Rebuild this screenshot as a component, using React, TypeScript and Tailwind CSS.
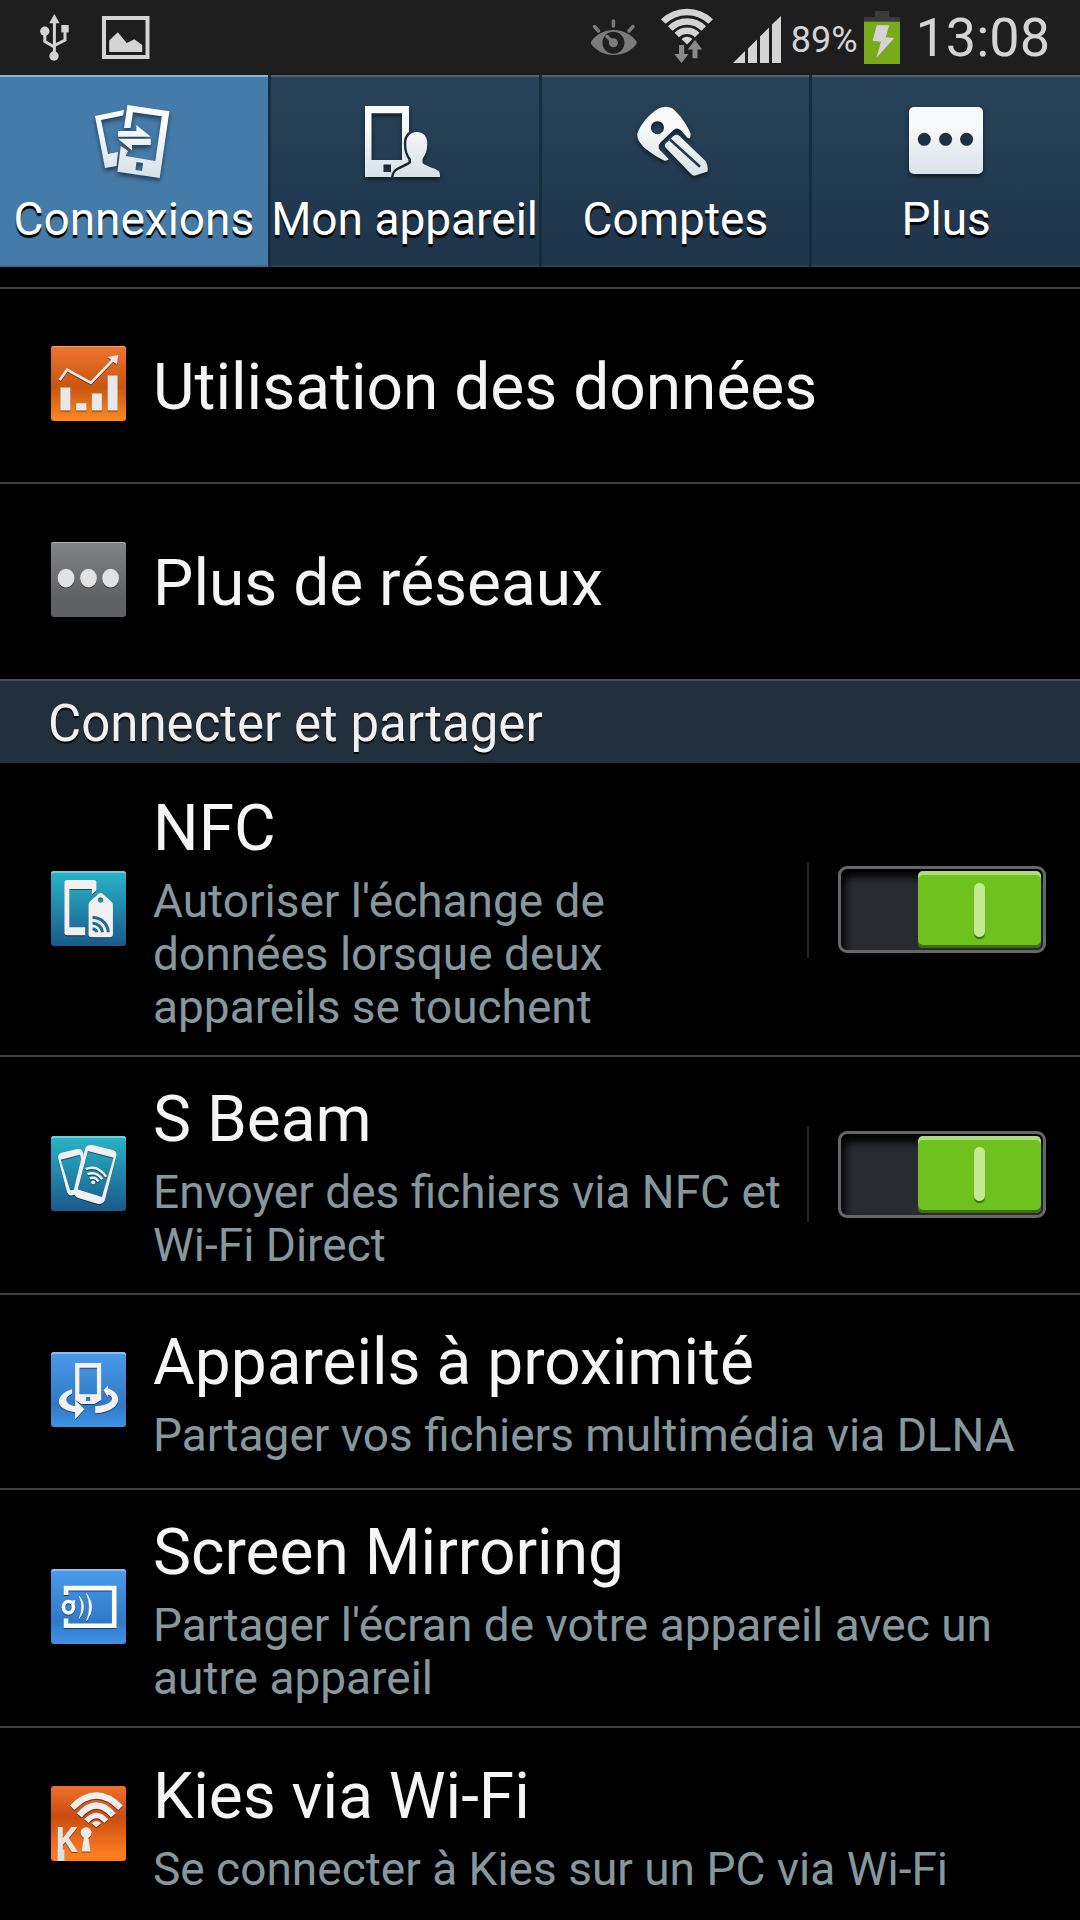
import React from 'react';

const FONT = "font-['Roboto','Noto_Sans',sans-serif]";

/* Status bar icons, all drawn on a 75px high strip */

function UsbIcon() {
  return (
    <svg className="w-8 h-[75px]" viewBox="0 -14 32 75" fill="#d4d4d4" aria-hidden="true">
      <path d="M15.4 0 20.6 9.3H10.2Z" />
      <path d="M15.4 8V40M5.8 18V27.5L15.4 33M26 16V26L15.4 31.5" fill="none" stroke="#d4d4d4" strokeWidth="3" />
      <circle cx="15" cy="42" r="4.7" />
      <circle cx="5.8" cy="17.3" r="4.7" />
      <rect x="22.3" y="11" width="7.4" height="7.4" />
    </svg>
  );
}

function PictureIcon() {
  return (
    <svg className="w-12 h-[75px]" viewBox="0 -16 48 75" fill="#d4d4d4" aria-hidden="true">
      <path d="M0 0H47.5V43H0ZM4 4V39H43.5V4Z" fillRule="evenodd" />
      <path d="M7.2 24.5 15.8 16.3 24.7 27 32.3 23.3 40.2 29V36H7.2Z" />
    </svg>
  );
}

function EyeIcon() {
  return (
    <svg className="w-[46px] h-[75px]" viewBox="0 -19 46 75" fill="#7b7b7b" aria-hidden="true">
      <path d="M0 22.5C6 15 13 11 22.5 11S40 15 45.5 22.5V25C40 32 32 36 22.5 36S6 32 0 25Z" />
      <circle cx="22.4" cy="23.7" r="11" fill="#1e1e1e" />
      <circle cx="22.4" cy="23.7" r="4.5" />
      <path
        d="M22.4 23.7 16 17.5M22.4 2V7M3.5 7.5 7.5 12M42 7.5 38 12"
        stroke="#7b7b7b"
        strokeWidth="3.5"
        strokeLinecap="round"
      />
    </svg>
  );
}

function WifiIcon() {
  return (
    <svg className="w-[52px] h-[75px]" viewBox="0 -10 52 75" fill="none" aria-hidden="true">
      <g stroke="#d4d4d4" strokeWidth="6.5">
        <path d="M2.3 11.5A34 34 0 0 1 49.7 11.5" />
        <path d="M9.3 18.5A23.5 23.5 0 0 1 42.7 18.5" />
        <path d="M15.8 25A14.5 14.5 0 0 1 36.2 25" />
      </g>
      <path d="M20.5 29Q26 24.5 31.5 29L26 34.5Z" fill="#d4d4d4" />
      <path d="M18 35H23.2V44H27.5L20.5 53 13.3 44H18ZM34 30 41.2 39.5H36.5V48.3H31.5V39.5H26.7Z" fill="#8a8a8a" />
    </svg>
  );
}

function SignalIcon() {
  return (
    <svg className="w-12 h-[75px]" viewBox="0 -16 48 75" fill="#d4d4d4" aria-hidden="true">
      <path d="M0 47 12 35V47ZM15 32.5 24 23.5V47H15ZM27 20.5 36 11.5V47H27ZM39 8.5 48 0V47H39Z" />
    </svg>
  );
}

function BatteryIcon() {
  return (
    <svg className="w-9 h-[75px]" viewBox="0 -11 36 75" aria-hidden="true">
      <path d="M11 0H25V6H36V10H0V6H11Z" fill="#3a3a3a" />
      <path d="M0 10H36V11H0Z" fill="#4b5c2c" />
      <path d="M0 11H36V53H0Z" fill="#79aa19" />
      <path d="M12.8 14.3H25.2L21.7 26.3 30.3 27 12.5 46.7 17 30.7 8.6 29.7Z" fill="#d4d4d4" />
    </svg>
  );
}

function StatusBar() {
  return (
    <header className="flex items-center justify-between h-[75px] bg-[#1e1e1e] text-[#d4d4d4] pl-[39px] pr-[30px]">
      <div className="flex items-center gap-[31px]">
        <UsbIcon />
        <PictureIcon />
      </div>
      <div className="flex items-center">
        <EyeIcon />
        <span className="w-6" />
        <WifiIcon />
        <span className="w-5" />
        <SignalIcon />
        <span className="text-[36px] leading-[42px] pl-2.5 pr-1.5 pt-1">89%</span>
        <BatteryIcon />
        <time className="text-[54px] leading-[64px] pl-4">13:08</time>
      </div>
    </header>
  );
}

/* Tab icons */

function ConnectionsIcon() {
  return (
    <>
      <path d="M1 14 30 8 29 13.5 7 18 14 52 24 50 22.5 64 11 66Z" />
      <path
        fillRule="evenodd"
        d="M33.4 3 75.4 9.3 65.7 76 23.4 69.7 26.8 44 34 49 31.7 54 61.3 59 67.8 14.3 39 10.3 36.5 26H30ZM42.5 60 49 61 48 69 41.5 68Z"
      />
      <path d="M24 29H42.3V23L56.8 34.7H24ZM24 36.7H56.8V43H38V48.5Z" />
    </>
  );
}

function DeviceIcon() {
  const person =
    'M51.6 30C58 30 62.5 34 62.3 42 62 50 60 53 57.5 57V61C62 65 72 66.5 74 69.5 75 71 75 73 75 75H28.6C29 70.5 31 69 34 67.5 39 65 43 63.5 46 61V57C43 53 41.3 49 41.3 42 41 34 46 30 51.6 30Z';
  return (
    <>
      <mask id="person-gap">
        <rect width="80" height="80" fill="#fff" />
        <path d={person} fill="#000" stroke="#000" strokeWidth="5" />
      </mask>
      <path
        mask="url(#person-gap)"
        fillRule="evenodd"
        d="M0 4H44V75H0ZM6.5 11.3V58H37V11.3ZM18.5 62.5H26V70H18.5Z"
      />
      <path d={person} />
    </>
  );
}

function KeyIcon() {
  return (
    <>
      <path
        fillRule="evenodd"
        d="M24 6.3Q31 3 37.6 6.5C43 11 52 22 55.5 31.3Q56 35 54.5 36.5L52.4 35.7 45.5 28Q42 25 38.5 28L25.5 40.5Q22.5 44 24.5 47.5L33.8 57.3Q32 59 29.7 58.7C20 54 13 49 8.3 44.7Q1 37 2.5 31C6 22 14 12 24 6.3ZM22.4 19.2A6.5 6.5 0 1 0 22.5 19.2Z"
      />
      <path d="M38 34.5Q41.5 31 45 34.5L71 59.5Q73.5 65 72.5 69.5L59.5 73.7Q57.5 73.5 56 72L30.5 45.5Q29 43 31 41Z" />
      <path d="M35 37.5 65 64.7" stroke="#21394f" strokeWidth="2.5" />
    </>
  );
}

function MoreIcon() {
  return (
    <>
      <rect x="3" y="5" width="74" height="67" rx="5" />
      <g fill="#1b3044">
        <circle cx="18.3" cy="37.3" r="6.5" />
        <circle cx="39.6" cy="37.3" r="6.5" />
        <circle cx="60.6" cy="37.3" r="6.5" />
      </g>
    </>
  );
}

const tabs = [
  { label: 'Connexions', icon: ConnectionsIcon },
  { label: 'Mon appareil', icon: DeviceIcon },
  { label: 'Comptes', icon: KeyIcon },
  { label: 'Plus', icon: MoreIcon },
];

function TabBar() {
  const [active, setActive] = React.useState('Connexions');

  return (
    <nav className="grid grid-cols-4 gap-[3px] bg-[#162c3f]" role="tablist">
      {tabs.map((tab) => {
        const isActive = tab.label === active;
        const Icon = tab.icon;
        return (
          <button
            key={tab.label}
            role="tab"
            aria-selected={isActive}
            onClick={() => setActive(tab.label)}
            className={`flex flex-col items-center h-48 pt-[25px] border-t-2 border-b-2 whitespace-nowrap text-white
              ${
                isActive
                  ? 'bg-[#447ba8] border-t-[#8bb2d0] border-b-[#3c6a8f]'
                  : 'bg-linear-to-b from-[#284359] to-[#1e344b] border-t-[#4f6473] border-b-[#2d4354]'
              }`}
          >
            <svg
              className="size-20 drop-shadow-[0_3px_2px_rgba(0,0,0,0.5)]"
              viewBox="0 0 80 80"
              fill="url(#tab-fill)"
              aria-hidden="true"
            >
              <defs>
                <linearGradient id="tab-fill" gradientUnits="userSpaceOnUse" x1="0" y1="0" x2="0" y2="80">
                  <stop offset="0.3" stopColor="#f8f9fa" />
                  <stop offset="1" stopColor="#d3dfe6" />
                </linearGradient>
              </defs>
              <Icon />
            </svg>
            <span className="mt-[11px] text-[46px] leading-[53px] [text-shadow:0_3px_1px_#000]">{tab.label}</span>
          </button>
        );
      })}
    </nav>
  );
}

/* List icons, drawn inside a 75px tile */

function DataUsageIcon() {
  return (
    <svg viewBox="62 50 224 224" fill="#e8e8e8" aria-hidden="true">
      <path d="M88 152 110 121 181 160 250 89" fill="none" stroke="#ececec" strokeWidth="8" />
      <path d="M231 83 263 77 259 106Z" />
      <path d="M90 174H120V243H90ZM137 221H168V243H137ZM184 192H214V243H184ZM231 138H261V243H231Z" />
    </svg>
  );
}

function NetworksIcon() {
  return (
    <svg viewBox="62 634 224 224" fill="#e2e2e3" aria-hidden="true">
      <ellipse cx="107" cy="742" rx="25" ry="28" />
      <ellipse cx="174" cy="742" rx="25" ry="28" />
      <ellipse cx="240" cy="742" rx="25" ry="28" />
    </svg>
  );
}

function NfcIcon() {
  return (
    <svg viewBox="62 66 224 224" fill="#f0f0f0" aria-hidden="true">
      <path d="M110 93H190Q198 93 198 101V123L184 136V120H117V234H164V258H110Q102 258 102 250V101Q102 93 110 93Z" />
      <path
        fillRule="evenodd"
        d="M204 134Q210 129 216 134L243 158Q247 162 247 167V256Q247 264 239 264H182Q174 264 174 256V167Q174 162 178 158ZM210 145A8 8 0 1 0 210.1 145Z"
      />
      <path
        d="M186 205A46 46 0 0 1 233 249M186 222A30 30 0 0 1 216 249M186 239A13 13 0 0 1 199 249"
        fill="none"
        stroke="#1c6a98"
        strokeWidth="9"
      />
    </svg>
  );
}

function BeamIcon() {
  return (
    <svg viewBox="66 66 224 224" fill="#f0f0f0" aria-hidden="true">
      <path
        fillRule="evenodd"
        d="M98 116 145 105Q158 103 161 114L164 126 140 226 144 241 126 244Q117 243 114 234L87 132Q86 120 98 116ZM95 137 123 228 134 227 156 136 153 122Z"
      />
      <path
        fillRule="evenodd"
        d="M190 93 250 108Q264 113 261 126L227 257Q222 271 207 269L147 251Q134 246 137 233L168 103Q174 91 190 93ZM176 111 146 226 218 248 253 131Z"
      />
      <g fill="none" stroke="#f0f0f0" strokeWidth="7">
        <path d="M170 165Q204 150 231 188" />
        <path d="M175 180Q200 170 219 195" />
        <path d="M182 193Q197 186 208 202" />
      </g>
      <circle cx="192" cy="205" r="6" />
    </svg>
  );
}

function NearbyIcon() {
  return (
    <svg viewBox="62 69 224 224" fill="#f2f2f2" aria-hidden="true">
      <path
        fillRule="evenodd"
        d="M134 102H212V212L192 224H152L134 212ZM147 116V195H199V116ZM167 204V215H179V204Z"
      />
      <path d="M125 180C80 192 62 238 134 249V270L162 240 134 212V231C104 226 98 205 125 193Z" />
      <path d="M219 183 232 169V178C276 190 280 246 194 252V231C242 228 258 206 232 196V205Z" />
    </svg>
  );
}

function MirroringIcon() {
  return (
    <svg viewBox="61 58 224 224" fill="#fafafa" aria-hidden="true">
      <path d="M99 108H257V234H99V206H113V221H243V122H113V136H99Z" />
      <ellipse cx="113" cy="172" rx="15" ry="17" fill="none" stroke="#fafafa" strokeWidth="11" />
      <path d="M124 151H134L131 164Z" />
      <path d="M145 139Q172 172 145 206 160 172 145 139ZM167 132Q198 172 167 213 184 172 167 132Z" stroke="#fafafa" strokeWidth="2" />
    </svg>
  );
}

function KiesIcon() {
  return (
    <svg viewBox="62 63 220 220" fill="#ececec" aria-hidden="true">
      <g fill="none" stroke="#efefef" strokeWidth="19">
        <path d="M124 127Q195 55 266 127" />
        <path d="M145 149Q195 92 245 149" />
        <path d="M166 166Q195 133 224 166" strokeWidth="16" />
      </g>
      <path d="M181 172Q195 160 209 172L195 184Z" />
      <text x="75" y="256" fontSize="102" fontWeight="700" fill="#e4e4e4">
        K
      </text>
      <path d="M81 250H102V283H81Z" fill="#e0e0e0" />
      <circle cx="165" cy="200" r="16" />
      <path d="M159 210H171L178 255H152Z" />
    </svg>
  );
}

/* Switch */

function Switch({ id }: { id: string }) {
  return (
    <div className="relative shrink-0">
      <input
        id={id}
        type="checkbox"
        role="switch"
        defaultChecked
        className="peer appearance-none block w-52 h-[87px] rounded-[9px] border-[3px] border-[#666] bg-[#2a2b31] shadow-[inset_4px_8px_8px_#000]"
      />
      <span className="absolute top-[5px] left-[5px] peer-checked:left-20 flex items-center justify-center w-[123px] h-[77px] rounded-[5px] bg-[#555] peer-checked:bg-[#6fc11e] shadow-[inset_0_4px_0_#ffffff70,inset_0_-3px_0_#3d6f10] pointer-events-none">
        <span className="w-[11px] h-[54px] rounded-full bg-[#c3e992] shadow-[0_2px_1px_#33700a]" />
      </span>
    </div>
  );
}

interface Setting {
  title: string;
  summary?: string;
  icon: () => React.JSX.Element;
  tile: string;
  toggle?: boolean;
}

const teal = 'bg-linear-to-b from-[#2ab5c8] to-[#1a5a8a] shadow-[inset_0_2px_0_#6fd0da]';
const blue = 'bg-linear-to-b from-[#4b9aea] via-[#2e7ac8] via-70% to-[#4093e3] shadow-[inset_0_2px_0_#8abcf0]';

const networks: Setting[] = [
  {
    title: 'Utilisation des données',
    icon: DataUsageIcon,
    tile: 'bg-linear-to-b from-[#f0732f] via-[#c85510] via-55% to-[#fd8a20] shadow-[inset_0_1px_0_#f5a070]',
  },
  {
    title: 'Plus de réseaux',
    icon: NetworksIcon,
    tile: 'bg-linear-to-b from-[#838487] to-[#606162] to-75% shadow-[inset_0_1px_0_#b0b0b2]',
  },
];

const sharing: Setting[] = [
  {
    title: 'NFC',
    summary: "Autoriser l'échange de données lorsque deux appareils se touchent",
    icon: NfcIcon,
    tile: teal,
    toggle: true,
  },
  {
    title: 'S Beam',
    summary: 'Envoyer des fichiers via NFC et Wi-Fi Direct',
    icon: BeamIcon,
    tile: teal,
    toggle: true,
  },
  {
    title: 'Appareils à proximité',
    summary: 'Partager vos fichiers multimédia via DLNA',
    icon: NearbyIcon,
    tile: blue,
  },
  {
    title: 'Screen Mirroring',
    summary: "Partager l'écran de votre appareil avec un autre appareil",
    icon: MirroringIcon,
    tile: blue,
  },
  {
    title: 'Kies via Wi-Fi',
    summary: 'Se connecter à Kies sur un PC via Wi-Fi',
    icon: KiesIcon,
    tile: 'bg-linear-to-b from-[#f0712c] via-[#c94c10] via-40% to-[#fb7c20] to-90%',
  },
];

function SettingRow({ item }: { item: Setting }) {
  const id = React.useId();
  const Icon = item.icon;
  return (
    <li className="flex items-center min-h-[195px] pl-[51px] pr-[34px] border-b-2 border-[#404040] last:border-b-0">
      <div
        className={`shrink-0 size-[75px] mb-1 rounded-[3px] overflow-hidden [&>svg]:drop-shadow-[0_1px_0_rgba(0,0,0,0.5)] ${item.tile}`}
      >
        <Icon />
      </div>
      <div className={`flex-1 min-w-0 pl-[27px] ${item.summary ? 'pt-7 pb-[21px]' : 'pt-1'}`}>
        <h3 className="text-[64px] leading-[70px] text-[#f5f5f5]">
          {item.toggle ? <label htmlFor={id}>{item.title}</label> : item.title}
        </h3>
        {item.summary && (
          <p className="mt-[11px] text-[46px] leading-[53px] text-[#87979e]">{item.summary}</p>
        )}
      </div>
      {item.toggle && (
        <div className="flex items-center ml-6 mb-0.5">
          <span className="w-0.5 h-24 mr-[29px] bg-[#262626]" />
          <Switch id={id} />
        </div>
      )}
    </li>
  );
}

export default function App() {
  return (
    <div className={`flex flex-col h-screen overflow-hidden bg-black ${FONT}`}>
      <StatusBar />
      <TabBar />
      <main className="flex-1 min-h-0 overflow-hidden">
        <ul className="mt-5 border-t-2 border-[#404040]">
          {networks.map((item) => (
            <SettingRow key={item.title} item={item} />
          ))}
        </ul>
        <h2 className="h-[84px] px-12 pt-[13px] text-[51px] leading-[60px] text-[#f0f0f0] bg-[#22303d] border-t-2 border-[#45525c] [text-shadow:0_2px_1px_#000]">
          Connecter et partager
        </h2>
        <ul className="pt-[3px]">
          {sharing.map((item) => (
            <SettingRow key={item.title} item={item} />
          ))}
        </ul>
      </main>
    </div>
  );
}
